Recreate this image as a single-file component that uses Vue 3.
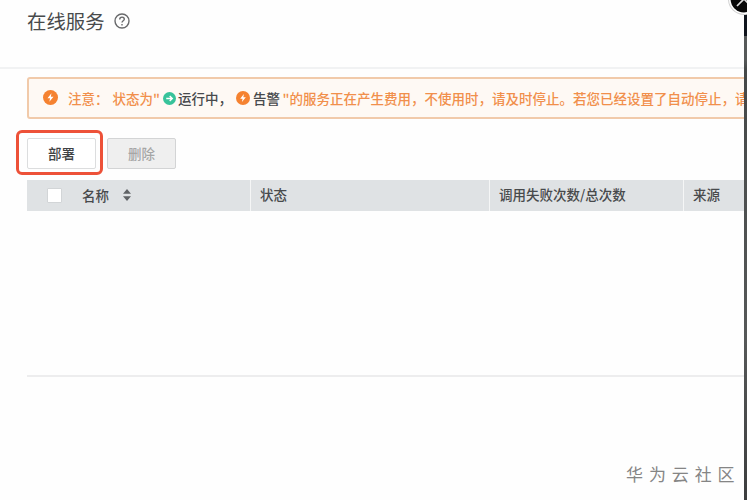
<script setup>
const columns = ['状态', '调用失败次数/总次数', '来源']
</script>

<template>
  <div class="screen">
    <main class="panel">
      <header class="heading">
        <h1>在线服务</h1>
        <svg class="help" viewBox="0 0 16 16">
          <circle cx="8" cy="8" r="7" />
          <path d="M5.7 6.4C5.7 3.4 10.4 3.5 10.3 6.2C10.2 7.8 8 7.8 8 9.6M8 11v1.4" />
        </svg>
      </header>

      <section class="notice">
        <svg class="alert" viewBox="0 0 16 16">
          <circle cx="8" cy="8" r="8" />
          <path d="M9 3.5L4.8 8.8h2.7L6.8 12.5l4.4-5.4H8.4z" />
        </svg>
        <span>注意：</span>
        <span>状态为"</span>
        <svg class="running" viewBox="0 0 14 14">
          <circle cx="7" cy="7" r="7" />
          <path d="M3.5 7h6M7.2 4.3L10 7L7.2 9.7" />
        </svg>
        <span class="dark">运行中，</span>
        <svg class="alert small" viewBox="0 0 16 16">
          <circle cx="8" cy="8" r="8" />
          <path d="M9 3.5L4.8 8.8h2.7L6.8 12.5l4.4-5.4H8.4z" />
        </svg>
        <span class="dark">告警</span>
        <span class="message">"的服务正在产生费用，不使用时，请及时停止。若您已经设置了自动停止，请</span>
      </section>

      <div class="actions">
        <div class="highlight"><button class="deploy">部署</button></div>
        <button class="remove" disabled>删除</button>
      </div>

      <section class="table">
        <div class="row">
          <div class="cell name">
            <i class="checkbox"></i>
            <span>名称</span>
            <svg class="sort" viewBox="0 0 8 12">
              <path d="M4 0L8 4.7H0zM0 7.3h8L4 12z" />
            </svg>
          </div>
          <div v-for="column in columns" :key="column" class="cell">{{ column }}</div>
        </div>
      </section>

      <footer>华为云社区</footer>
    </main>
    <aside class="backdrop"></aside>
    <svg class="close" viewBox="0 0 32 32">
      <circle class="halo" cx="16" cy="16" r="16" />
      <circle class="ring" cx="16" cy="16" r="15" />
      <circle class="disc" cx="16" cy="16" r="13.4" />
      <path d="M9 23L23 9M9 9L23 23" />
    </svg>
  </div>
</template>

<style>
body {
  margin: 0;
}
</style>

<style scoped>
.screen {
  position: relative;
  display: flex;
  width: 747px;
  height: 500px;
  overflow: hidden;
  background: #fefefe;
  color: #484a4c;
  font: 500 13.5px "Noto Sans CJK SC", sans-serif;
}
.panel {
  display: flex;
  flex-direction: column;
  width: 744px;
  flex: none;
  overflow: hidden;
}
.backdrop {
  width: 3px;
  background: linear-gradient(#10151d 0 36px, #565959 36px 60px, #454848 70px, #565858 340px, #3c3d3e 500px);
}
.heading {
  display: flex;
  box-sizing: border-box;
  height: 69px;
  flex: none;
  padding: 6px 0 0 27px;
  border-bottom: 2px solid #f1f2f3;
}
h1 {
  margin: 0;
  font-size: 19.4px;
  font-weight: 400;
  line-height: 30px;
}
.help {
  width: 16px;
  height: 16px;
  margin: 7px 0 0 9px;
  fill: none;
  stroke: #68696b;
  stroke-width: 1.4;
}
.notice {
  display: grid;
  grid-template-columns: 25px 44.5px 50px 15.5px 58px 17px 29.5px 485px;
  align-items: center;
  box-sizing: border-box;
  width: 740px;
  height: 42px;
  flex: none;
  margin: 8px 0 0 27px;
  padding: 0 0 0 14px;
  border: 2px solid #f1caaa;
  border-radius: 3px;
  background: #fef9f4;
  color: #f18f4b;
  line-height: 20px;
  white-space: nowrap;
}
.alert {
  width: 15px;
  height: 15px;
  margin-top: -2px;
  fill: #f58230;
}
.alert path {
  fill: #fff;
}
.small {
  width: 14px;
  height: 14px;
  margin-top: 0;
}
.running {
  width: 13px;
  height: 13px;
  fill: #37c39a;
}
.running path {
  fill: none;
  stroke: #fff;
  stroke-width: 1.5;
}
.dark {
  color: #484a4c;
}
.actions {
  display: flex;
  align-items: flex-start;
  gap: 4px;
  height: 46px;
  flex: none;
  margin: 11px 0 0 16px;
}
.highlight {
  box-sizing: border-box;
  width: 87px;
  height: 45px;
  padding: 5px 0 0 8px;
  border: 3px solid #ed5138;
  border-radius: 6px;
}
button {
  display: block;
  box-sizing: border-box;
  width: 69px;
  height: 31px;
  padding: 0 0 1px;
  border: 1px solid #dcddde;
  border-radius: 2px;
  background: #fff;
  color: #404244;
  font: inherit;
  line-height: 27px;
}
.remove {
  margin-top: 8px;
  border-color: #d3d4d5;
  background: #efefef;
  color: #a6a6a6;
}
.table {
  box-sizing: border-box;
  height: 197px;
  flex: none;
  margin: 4px 0 0 27px;
  border-bottom: 2px solid #ededee;
}
.row {
  display: grid;
  grid-template-columns: 223px 239px 194px 62px;
  height: 31px;
  background: #dfe2e4;
  line-height: 29px;
}
.cell {
  padding-left: 9px;
  border-left: 1px solid #f5f6f6;
  white-space: nowrap;
}
.name {
  display: flex;
  align-items: center;
  height: 30px;
  padding-left: 20px;
  border-left: 0;
}
.checkbox {
  width: 13px;
  height: 13px;
  margin-right: 20px;
  border: 1px solid #d2d5d7;
  border-radius: 1px;
  background: #fff;
}
.name span {
  margin-right: 14px;
}
.sort {
  width: 8px;
  height: 12px;
  fill: #606366;
}
footer {
  margin: 82px 0 0 626px;
  color: #858585;
  font-size: 17px;
  font-weight: 400;
  letter-spacing: 5.9px;
  line-height: 30px;
  white-space: nowrap;
}
.close {
  position: absolute;
  left: 728px;
  top: -17px;
  width: 32px;
  height: 32px;
}
.halo {
  fill: #d2d2d2;
}
.ring {
  fill: #fff;
}
.disc {
  fill: #080808;
}
.close path {
  fill: none;
  stroke: #ddd;
  stroke-width: 1.7;
}
</style>
